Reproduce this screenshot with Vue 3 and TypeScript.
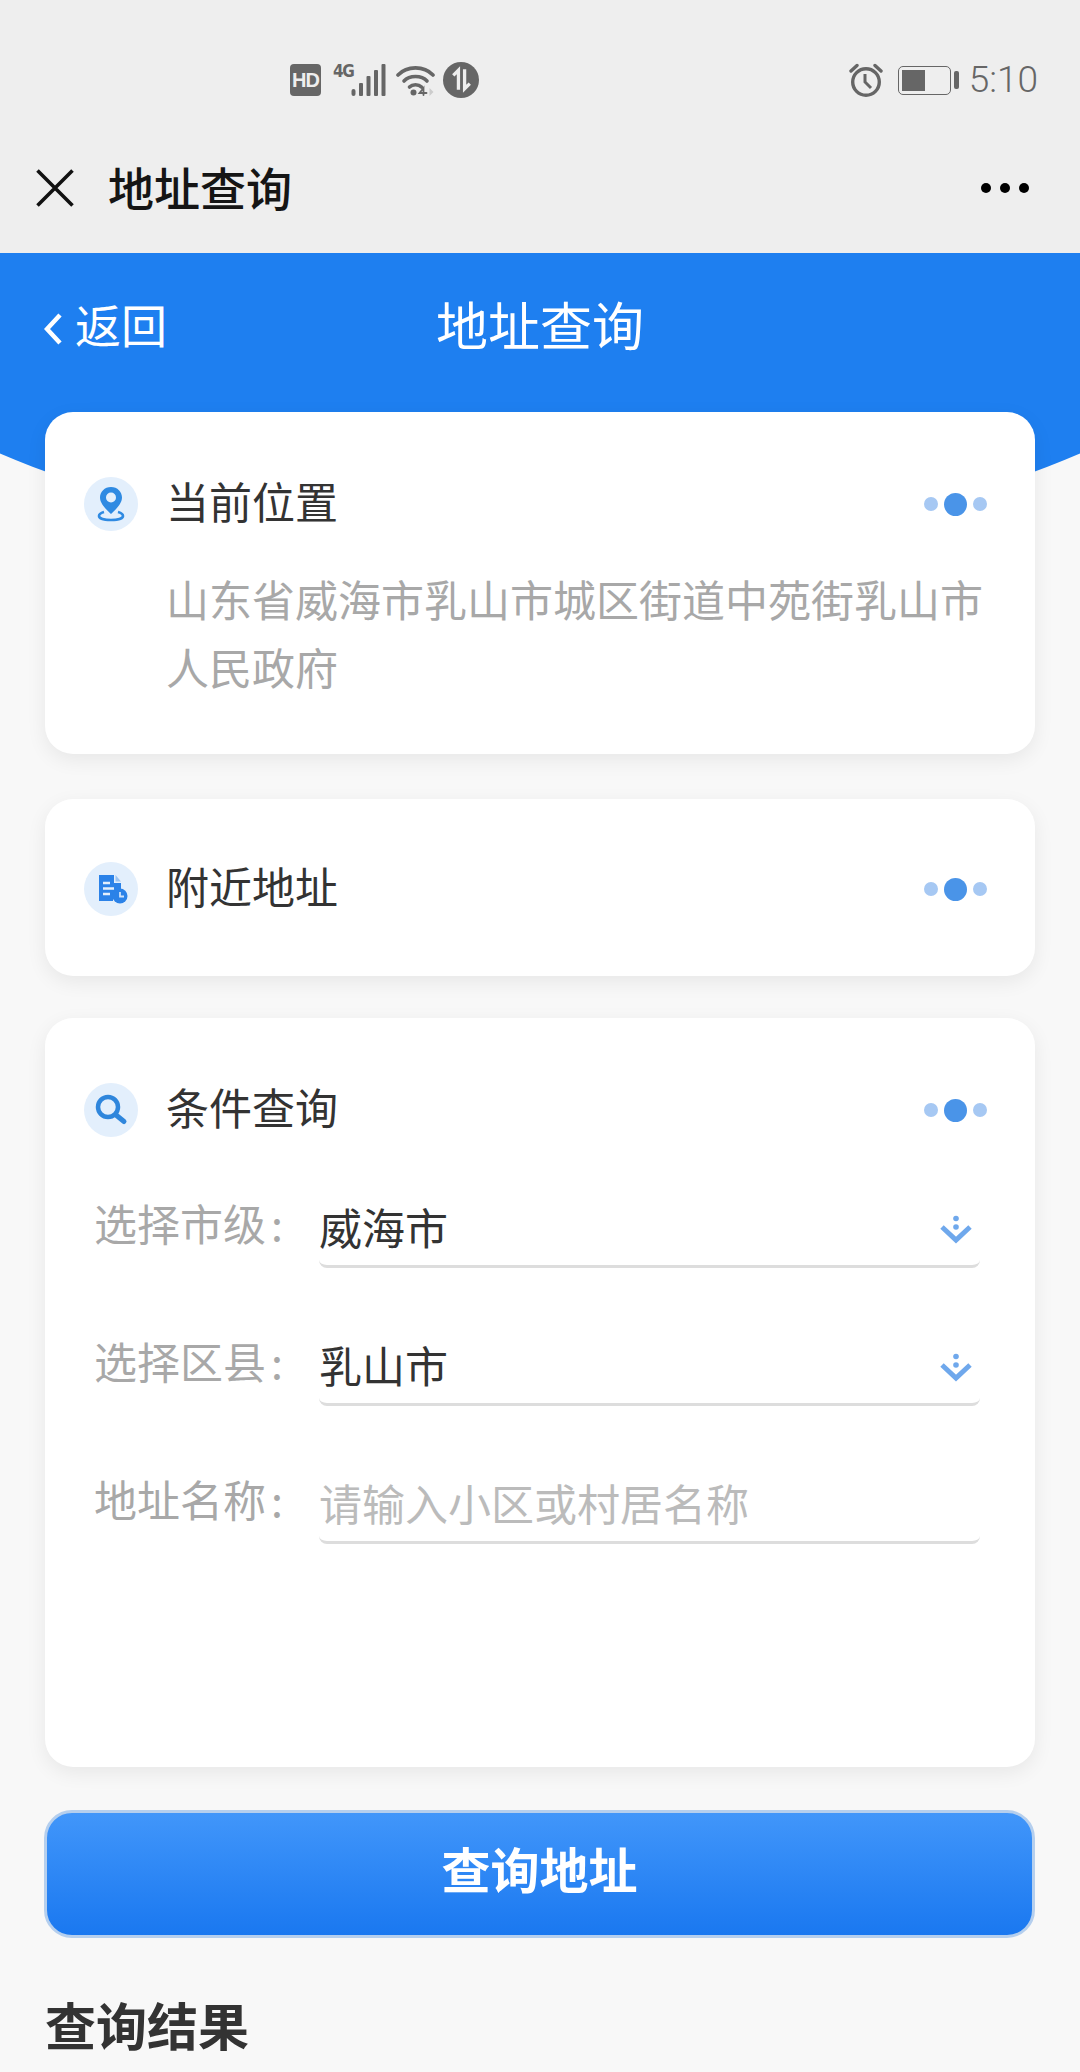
<template>
  <div class="page">
    <div class="status-bar">
      <div class="status-left">
        <span class="hd">HD</span>
        <div class="signal">
          <span class="net">4G</span>
          <svg width="35" height="32" viewBox="0 0 34 32">
            <rect x="0" y="25" width="4" height="7" rx="2" fill="#666" />
            <rect x="7.5" y="19" width="4" height="13" rx="1" fill="#666" />
            <rect x="15" y="12" width="4" height="20" rx="1" fill="#666" />
            <rect x="22.5" y="6" width="4" height="26" rx="1" fill="#666" />
            <rect x="30" y="0" width="4" height="32" rx="1" fill="#666" />
          </svg>
        </div>
        <svg class="wifi" width="39" height="32" viewBox="0 0 38 32" fill="none" stroke="#666" stroke-width="3.6" stroke-linecap="round">
          <path d="M1.5 11C10.5 1.5 27.500 1.5 36.500 11" />
          <path d="M7.500 17C13 11 25 11 30.500 17" />
          <path d="M13 23C16 20 22 20 25 23" />
          <circle cx="17" cy="28.500" r="3" fill="#666" stroke="none" />
          <path d="M27 31V24L23 29H30" stroke-width="1.800" />
          <path d="M33 24L37 28L33 32Z" fill="#ccc" stroke="none" />
        </svg>
        <svg class="data" width="36" height="36" viewBox="0 0 35 35">
          <circle cx="17.500" cy="17.500" r="17.500" fill="#666" />
          <path d="M15 27V8L10 13M21 7V26L26 21" fill="none" stroke="#eee" stroke-width="3.200" />
        </svg>
      </div>
      <div class="status-right">
        <svg width="34" height="34" viewBox="0 0 34 34" fill="none" stroke="#666" stroke-width="3.400">
          <circle cx="17" cy="19" r="13.300" />
          <path d="M16 11V19L22 25" stroke-width="3" />
          <path d="M2 8L8 2.500M32 8L26 2.500" stroke-linecap="round" />
        </svg>
        <div class="battery">
          <div class="battery-body"><div class="battery-level" /></div>
          <div class="battery-nub" />
        </div>
        <span class="clock">5:10</span>
      </div>
    </div>

    <div class="title-bar">
      <svg class="close" width="38" height="38" viewBox="0 0 38 38" fill="none" stroke="#111" stroke-width="3.600">
        <path d="M1.500 1.500L36.500 36.500M36.500 1.500L1.500 36.500" />
      </svg>
      <span class="title-text">地址查询</span>
      <div class="more">
        <i /><i /><i />
      </div>
    </div>

    <div class="hero">
      <div class="hero-row">
        <div class="back">
          <svg width="18" height="32" viewBox="0 0 18 32" fill="none" stroke="#fff" stroke-width="4.500">
            <path d="M16 2L3 16L16 30" />
          </svg>
          <span>返回</span>
        </div>
        <span class="hero-title">地址查询</span>
      </div>
    </div>

    <main class="content">
      <section class="card card-location">
        <div class="card-head">
          <span class="icon-wrap">
            <svg width="54" height="54" viewBox="0 0 54 54">
              <path d="M27 10C20.500 10 16 15 16 20.500C16 27 23 33 27 37C31 33 38 27 38 20.500C38 15 33.500 10 27 10Z" fill="#2f8ae2" />
              <circle cx="27" cy="20.500" r="5" fill="#e3effc" />
              <path d="M20 35C16.500 36 15 37.500 15 39C15 41.500 20.500 43 27 43C33.500 43 39 41.500 39 39C39 37.500 37.500 36 34 35" fill="none" stroke="#2f8ae2" stroke-width="2.600" />
            </svg>
          </span>
          <span class="card-title">当前位置</span>
          <span class="dots"><i /><b /><i /></span>
        </div>
        <p class="address">山东省威海市乳山市城区街道中苑街乳山市人民政府</p>
      </section>

      <section class="card card-nearby">
        <div class="card-head">
          <span class="icon-wrap">
            <svg width="54" height="54" viewBox="0 0 54 54">
              <path d="M15 13H30V21H37V28C32 28 29 32 29 39H15Z" fill="#2b82e8" />
              <path d="M31.500 13L37 19.500H31.500Z" fill="#9cc4f2" />
              <path d="M19 21H26M19 26.500H30M19 32H26" stroke="#e3effc" stroke-width="2.400" />
              <circle cx="36" cy="34" r="7.500" fill="#2b82e8" />
              <path d="M36 30V34.500H40" fill="none" stroke="#cfe2f9" stroke-width="1.800" />
            </svg>
          </span>
          <span class="card-title">附近地址</span>
          <span class="dots"><i /><b /><i /></span>
        </div>
      </section>

      <section class="card card-query">
        <div class="card-head">
          <span class="icon-wrap">
            <svg width="54" height="54" viewBox="0 0 54 54" fill="none" stroke="#2f86dc">
              <circle cx="24" cy="24" r="10" stroke-width="4.500" />
              <path d="M32 32L40 38.500" stroke-width="5" stroke-linecap="round" />
            </svg>
          </span>
          <span class="card-title">条件查询</span>
          <span class="dots"><i /><b /><i /></span>
        </div>
        <div class="form">
          <div v-for="f in fields" :key="f.label" class="form-row">
            <span class="label">{{ f.label }}<em>:</em></span>
            <div class="field">
              <span :class="f.value ? 'value' : 'placeholder'">{{ f.value || f.placeholder }}</span>
              <svg v-if="f.select" width="34" height="30" viewBox="0 0 34 30">
                <path d="M3 12L17 25L31 12" fill="none" stroke="#6fa8ec" stroke-width="5" />
                <circle cx="17" cy="3.500" r="2.800" fill="#6fa8ec" />
                <circle cx="17" cy="12" r="2.800" fill="#6fa8ec" />
              </svg>
            </div>
          </div>
        </div>
      </section>

      <button class="submit">查询地址</button>
      <h2 class="result-title">查询结果</h2>
    </main>
  </div>
</template>

<script setup lang="ts">
type Field = {
  label: string
  value?: string
  placeholder?: string
  select: boolean
}

const fields: Field[] = [
  { label: '选择市级', value: '威海市', select: true },
  { label: '选择区县', value: '乳山市', select: true },
  { label: '地址名称', placeholder: '请输入小区或村居名称', select: false },
]
</script>

<style>
body {
  background: #f8f8f8;
}
</style>

<style scoped>
.page {
  width: 1080px;
  height: 2072px;
  overflow: hidden;
  background: #f8f8f8;
  font-family: 'Noto Sans CJK SC', 'Liberation Sans', sans-serif;
}

.status-bar {
  height: 94px;
  padding: 33px 42px 0 290px;
  background: #eee;
  display: flex;
  align-items: center;
  justify-content: space-between;
}

.status-left,
.status-right {
  display: flex;
  align-items: center;
}

.hd {
  width: 31px;
  height: 32px;
  border-radius: 4px;
  background: #666;
  color: #eee;
  font: bold 20px/32px 'Liberation Sans', sans-serif;
  text-align: center;
  letter-spacing: -1px;
}

.signal {
  display: flex;
  margin-left: 12px;
}

.net {
  width: 18px;
  color: #666;
  font: bold 17px/15px 'DejaVu Sans Condensed', 'Liberation Sans', sans-serif;
  letter-spacing: -1.5px;
}

.wifi {
  margin-left: 10px;
}

.data {
  margin-left: 8px;
}

.battery {
  display: flex;
  align-items: center;
  margin-left: 15px;
}

.battery-body {
  width: 53px;
  height: 29px;
  padding: 3px;
  border: 1.500px solid #666;
  border-radius: 5px;
  box-sizing: border-box;
}

.battery-level {
  width: 23px;
  height: 100%;
  background: #666;
}

.battery-nub {
  width: 5px;
  height: 18px;
  margin-left: 3px;
  border-radius: 2px;
  background: #666;
}

.clock {
  margin-left: 10px;
  color: #666;
  font: 300 37px/40px Roboto, sans-serif;
}

.title-bar {
  height: 126px;
  padding: 0 51px 4px 36px;
  background: #eee;
  display: flex;
  align-items: center;
  box-sizing: border-box;
}

.title-text {
  margin-left: 34px;
  color: #151515;
  font-size: 46px;
  font-weight: 500;
  margin-bottom: 4px;
}

.more {
  margin-left: auto;
  display: flex;
  gap: 9px;
}

.more i {
  width: 10px;
  height: 10px;
  border-radius: 50%;
  background: #000;
}

.hero {
  height: 300px;
  margin-bottom: -141px;
  padding-top: 34px;
  box-sizing: border-box;
  background: #1e7ff0;
  clip-path: ellipse(800px 376px at 540px -77px);
}

.hero-row {
  position: relative;
  height: 72px;
  display: flex;
  align-items: center;
  justify-content: center;
  color: #fff;
}

.back {
  position: absolute;
  left: 44px;
  display: flex;
  align-items: center;
  gap: 13px;
  font-size: 46px;
}

.back svg {
  margin-top: 12px;
}

.hero-title {
  font-size: 52px;
}

.content {
  position: relative;
  padding: 0 45px;
}

.card {
  background: #fff;
  border-radius: 28px;
  box-shadow: 0 6px 20px rgba(0, 0, 0, 0.07);
}

.card-location {
  height: 342px;
  padding-top: 65px;
  box-sizing: border-box;
}

.card-nearby {
  height: 177px;
  margin-top: 45px;
  padding-top: 63px;
  box-sizing: border-box;
}

.card-query {
  height: 749px;
  margin-top: 42px;
  padding-top: 65px;
  box-sizing: border-box;
}

.card-head {
  height: 54px;
  padding: 0 48px 0 39px;
  display: flex;
  align-items: center;
}

.icon-wrap {
  width: 54px;
  height: 54px;
  border-radius: 50%;
  background: #e3effc;
}

.icon-wrap svg {
  display: block;
}

.card-title {
  margin: 0 0 8px 28px;
  color: #333;
  font-size: 43px;
}

.dots {
  margin-left: auto;
  display: flex;
  align-items: center;
  gap: 6px;
}

.dots i {
  width: 14px;
  height: 14px;
  border-radius: 50%;
  background: #a6c8f3;
}

.dots b {
  width: 23px;
  height: 23px;
  border-radius: 50%;
  background: #4a94e8;
}

.address {
  margin: 33px 45px 0 121px;
  color: #a8a8a8;
  font-size: 43px;
  line-height: 68px;
}

.form {
  margin-top: 49px;
  padding: 0 55px 0 49px;
  display: flex;
  flex-direction: column;
  gap: 56px;
}

.form-row {
  display: flex;
}

.label {
  width: 225px;
  flex: none;
  color: #a8a8a8;
  font-size: 43px;
  line-height: 80px;
  margin-top: -4px;
}

.label em {
  margin-left: 5px;
  font-style: normal;
}

.field {
  flex: 1;
  height: 79px;
  padding-right: 7px;
  border-bottom: 3px solid #ddd;
  border-radius: 0 0 8px 8px;
  display: flex;
  align-items: center;
  justify-content: space-between;
}

.field svg {
  margin-top: 8px;
}

.value {
  color: #333;
  font-size: 43px;
}

.placeholder {
  color: #bbb;
  font-size: 43px;
}

.submit {
  display: block;
  width: 991px;
  height: 128px;
  margin: 43px 0 0 -1px;
  padding: 0 0 14px;
  border: 3px solid #b5cfee;
  border-radius: 28px;
  background: linear-gradient(#4196fa, #1a78f0);
  color: #fff;
  font: bold 49px 'Noto Sans CJK SC', sans-serif;
}

.result-title {
  margin: 50px 0 0;
  color: #333;
  font-size: 51px;
  font-weight: 700;
  line-height: 72px;
}
</style>
